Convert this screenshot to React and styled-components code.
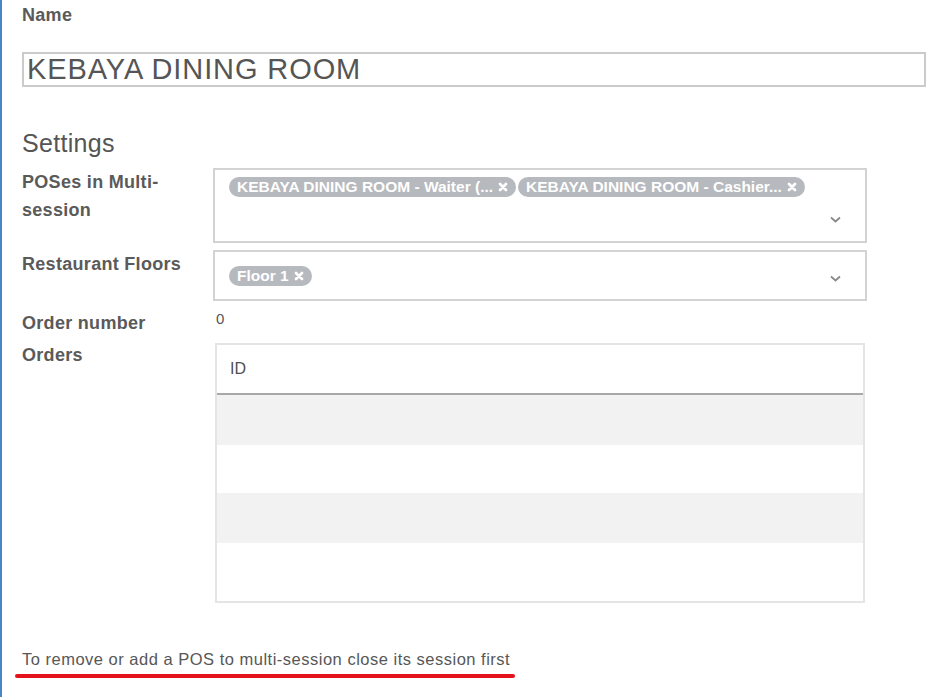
import React from "react";
import styled, { createGlobalStyle } from "styled-components";

const GlobalStyle = createGlobalStyle`
  html, body {
    margin: 0;
    padding: 0;
    background: #fff;
    font-family: "Liberation Sans", Arial, sans-serif;
  }
`;

const Page = styled.div`
  box-sizing: border-box;
  min-height: 697px;
  border-left: 2px solid #4a86c4;
  padding: 5px 13px 0 20px;
  color: #555;
`;

const FieldLabel = styled.div`
  font-size: 18px;
  font-weight: bold;
  letter-spacing: 0.3px;
  line-height: 20px;
  color: #5a5a5a;
`;

const NameInput = styled.input`
  display: block;
  box-sizing: border-box;
  width: 100%;
  height: 35px;
  margin-top: 27px;
  padding: 0 3px;
  border: 2px solid #cbcbcb;
  font-family: "Liberation Sans", Arial, sans-serif;
  font-size: 29px;
  letter-spacing: 0.9px;
  color: #555;
  outline: none;
`;

const SectionTitle = styled.h2`
  margin: 41px 0 10px;
  font-size: 25px;
  font-weight: normal;
  letter-spacing: 0.3px;
  line-height: 30px;
  color: #555;
`;

const FieldRow = styled.div`
  display: grid;
  grid-template-columns: 191px 654px;
  margin-bottom: ${(p) => p.$gap || 0}px;
`;

const RowLabel = styled.div`
  padding-right: 24px;
  font-size: 18px;
  font-weight: bold;
  letter-spacing: 0.3px;
  line-height: 28px;
  color: #5a5a5a;
`;

const MultiBox = styled.div`
  box-sizing: border-box;
  height: ${(p) => p.$height}px;
  border: 2px solid #d3d3d3;
  padding: ${(p) => (p.$stacked ? "7px 0 0 14px" : "0 0 0 14px")};
  display: flex;
  flex-direction: ${(p) => (p.$stacked ? "column" : "row")};
  align-items: ${(p) => (p.$stacked ? "stretch" : "center")};
`;

const TagList = styled.div`
  display: flex;
  gap: 2px;
`;

const Tag = styled.span`
  display: inline-flex;
  align-items: center;
  gap: 5px;
  height: 20px;
  padding: 0 8px;
  border-radius: 10px;
  background: #b6b9bd;
  color: #fff;
  font-size: 15.5px;
  font-weight: bold;
  white-space: nowrap;
`;

const InputLine = styled.div`
  flex: 1;
  display: flex;
  align-items: center;
  justify-content: flex-end;
  padding-right: 23px;
`;

const Spacer = styled.div`
  flex: 1;
`;

const Chevron = styled.svg`
  width: 13px;
  height: 9px;
  margin-right: ${(p) => p.$right || 0}px;
  margin-top: ${(p) => p.$top || 0}px;
`;

const Value = styled.div`
  padding-left: 3px;
  font-size: 15px;
  line-height: 20px;
  color: #555;
`;

const Table = styled.div`
  box-sizing: border-box;
  width: 650px;
  height: 260px;
  margin: 2px 0 0 2px;
  border: 2px solid #e4e4e4;
  display: flex;
  flex-direction: column;
`;

const TableHead = styled.div`
  height: 48px;
  padding-left: 13px;
  display: flex;
  align-items: center;
  border-bottom: 2px solid #a8a8a8;
  font-size: 16px;
  font-weight: 500;
  color: #4f4f4f;
`;

const TableRow = styled.div`
  height: ${(p) => p.$h}px;
  background: ${(p) => (p.$odd ? "#f2f2f2" : "#fff")};
`;

const Note = styled.div`
  margin-top: 46px;
  font-size: 16.5px;
  letter-spacing: 0.5px;
  line-height: 20px;
  color: #575757;
`;

const RedMark = styled.div`
  width: 500px;
  height: 4px;
  margin: 5px 0 0 -7px;
  border-radius: 2px;
  background: #e3121b;
`;

const CloseIcon = () => (
  <svg width="10" height="10" viewBox="0 0 10 10">
    <path d="M2 2 L8 8 M8 2 L2 8" stroke="#fff" strokeWidth="2.8" strokeLinecap="round" />
  </svg>
);

const Caret = (props) => (
  <Chevron viewBox="0 0 13 9" {...props}>
    <path d="M2 2.5 L6.5 6.5 L11 2.5" fill="none" stroke="#888" strokeWidth="1.7" />
  </Chevron>
);

const TagItem = ({ label }) => (
  <Tag>
    {label}
    <CloseIcon />
  </Tag>
);

export default function App() {
  return (
    <>
      <GlobalStyle />
      <Page>
        <FieldLabel>Name</FieldLabel>
        <NameInput readOnly defaultValue="KEBAYA DINING ROOM" />

        <SectionTitle>Settings</SectionTitle>

        <FieldRow $gap={7}>
          <RowLabel>POSes in Multi-session</RowLabel>
          <MultiBox $height={75} $stacked>
            <TagList>
              <TagItem label="KEBAYA DINING ROOM - Waiter (..." />
              <TagItem label="KEBAYA DINING ROOM - Cashier..." />
            </TagList>
            <InputLine>
              <Caret />
            </InputLine>
          </MultiBox>
        </FieldRow>

        <FieldRow $gap={8}>
          <RowLabel>Restaurant Floors</RowLabel>
          <MultiBox $height={51}>
            <TagItem label="Floor 1" />
            <Spacer />
            <Caret $right={23} $top={6} />
          </MultiBox>
        </FieldRow>

        <FieldRow $gap={4}>
          <RowLabel>Order number</RowLabel>
          <Value>0</Value>
        </FieldRow>

        <FieldRow>
          <RowLabel>Orders</RowLabel>
          <Table>
            <TableHead>ID</TableHead>
            <TableRow $h={50} $odd />
            <TableRow $h={48} />
            <TableRow $h={50} $odd />
            <TableRow $h={58} />
          </Table>
        </FieldRow>

        <Note>To remove or add a POS to multi-session close its session first</Note>
        <RedMark />
      </Page>
    </>
  );
}
